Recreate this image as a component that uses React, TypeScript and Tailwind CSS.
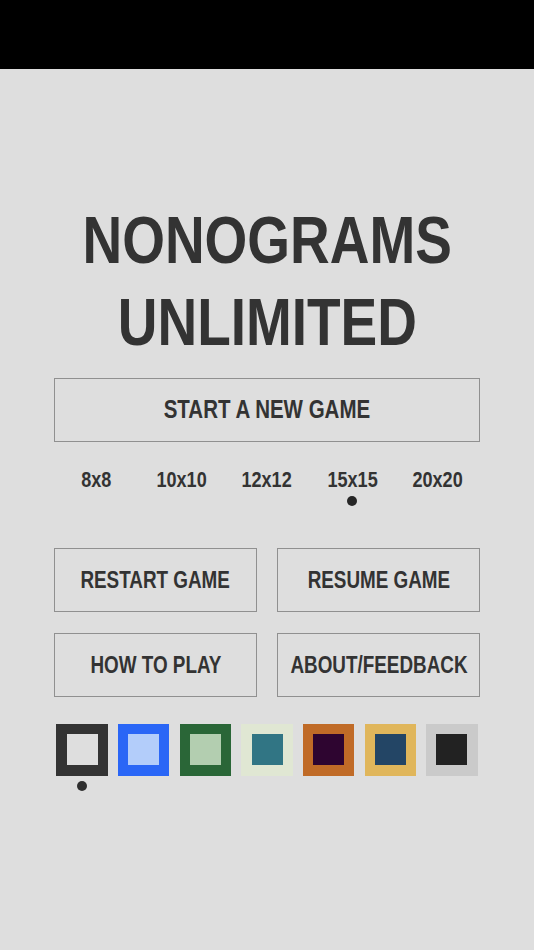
import React from "react";

const swatches = [
  { outer: "bg-[#333333]", inner: "bg-[#dedede]" },
  { outer: "bg-[#2a66f6]", inner: "bg-[#b3cdfa]" },
  { outer: "bg-[#2a6637]", inner: "bg-[#b3ceb0]" },
  { outer: "bg-[#e0e7d3]", inner: "bg-[#317584]" },
  { outer: "bg-[#c06b27]", inner: "bg-[#2e0530]" },
  { outer: "bg-[#e0b65b]", inner: "bg-[#234565]" },
  { outer: "bg-[#cacaca]", inner: "bg-[#222222]" },
];

const sizes = ["8x8", "10x10", "12x12", "15x15", "20x20"];

function N({ children }: { children: React.ReactNode }) {
  return <span className="inline-block whitespace-nowrap scale-x-[0.82]">{children}</span>;
}

export default function App() {
  return (
    <div
      className="w-[534px] h-[950px] bg-[#dedede] text-[#333333] font-bold overflow-hidden"
      style={{ fontFamily: '"Liberation Sans", Arial, sans-serif' }}
    >
      <div className="h-[69px] bg-black" />
      <div className="px-[54px]">
        <div className="mt-[130px] flex flex-col items-center text-[67px] leading-[82px]">
          <div className="flex justify-center w-full"><N>NONOGRAMS</N></div>
          <div className="flex justify-center w-full"><N>UNLIMITED</N></div>
        </div>
        <div className="mt-[15px] h-[64px] border-[1.5px] border-[#909090] flex items-center justify-center text-[25px]">
          <N>START A NEW GAME</N>
        </div>
        <div className="mt-[25px] grid grid-cols-5 text-[22px] leading-[26px]">
          {sizes.map((s) => (
            <div key={s} className="flex flex-col items-center">
              <N>{s}</N>
              <div
                className={
                  s === "15x15"
                    ? "mt-[3px] w-[10px] h-[10px] rounded-full bg-[#262626]"
                    : "mt-[3px] w-[10px] h-[10px]"
                }
              />
            </div>
          ))}
        </div>
        <div className="mt-[42px] grid grid-cols-2 gap-x-[20px] gap-y-[21px] text-[23px]">
          {["RESTART GAME", "RESUME GAME", "HOW TO PLAY", "ABOUT/FEEDBACK"].map((t) => (
            <div
              key={t}
              className="h-[64px] border-[1.5px] border-[#909090] flex items-center justify-center overflow-visible"
            >
              <N>{t}</N>
            </div>
          ))}
        </div>
        <div className="mt-[27px] flex justify-center gap-[10.17px]">
          {swatches.map((s, i) => (
            <div key={i} className="flex flex-col items-center">
              <div className={`w-[51.5px] h-[51.5px] p-[10.25px] ${s.outer}`}>
                <div className={`w-full h-full ${s.inner}`} />
              </div>
              {i === 0 ? (
                <div className="mt-[5px] w-[10.5px] h-[10.5px] rounded-full bg-[#2f2f2f]" />
              ) : null}
            </div>
          ))}
        </div>
      </div>
    </div>
  );
}
